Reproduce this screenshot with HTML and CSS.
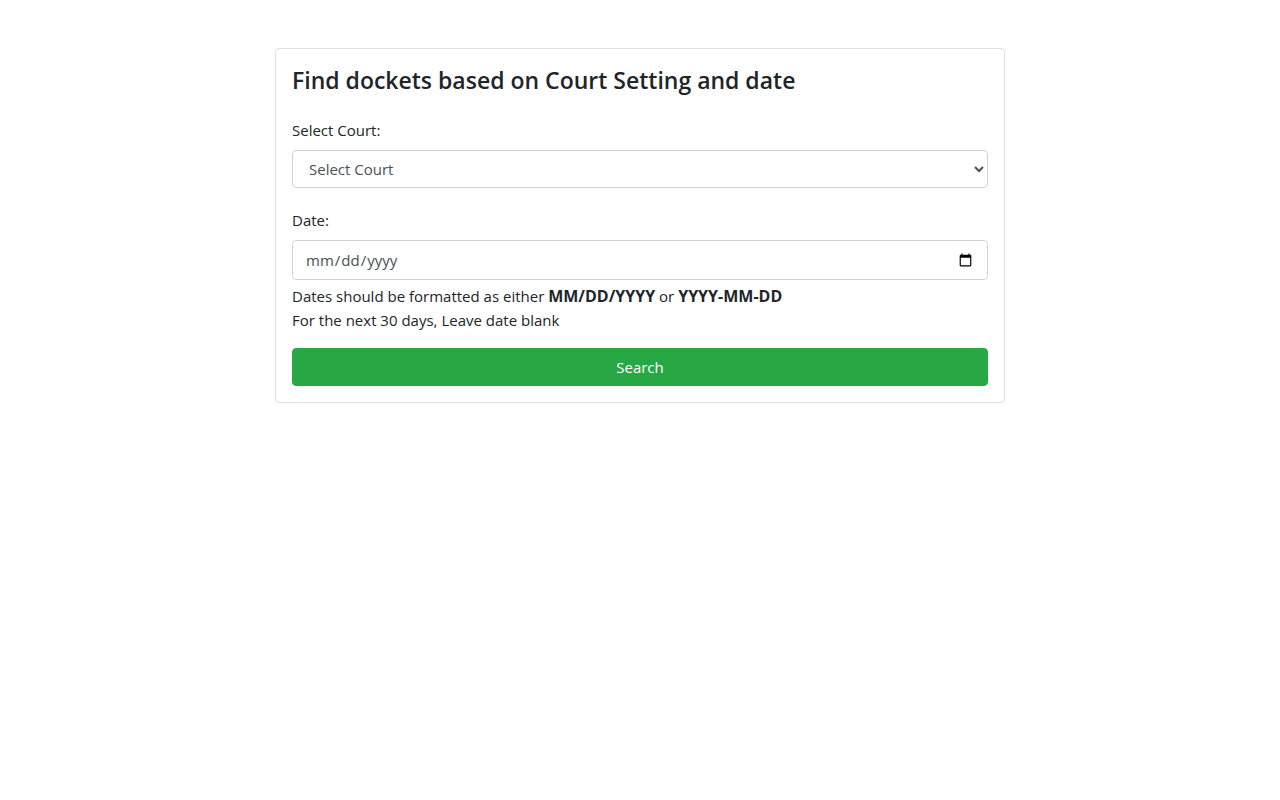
FILE: index.html
```html
<!DOCTYPE html>
<html lang="en">
<head>
<meta charset="utf-8">
<meta name="viewport" content="width=device-width, initial-scale=1">
<title>Find dockets</title>
<link rel="stylesheet" href="styles.css">
</head>
<body>
<main class="container">
  <form class="card">
    <h1 class="card-title">Find dockets based on Court Setting and date</h1>
    <div class="form-group">
      <label for="court">Select Court:</label>
      <select id="court" class="form-control court-select">
        <option>Select Court</option>
      </select>
    </div>
    <div class="form-group date-group">
      <label for="date">Date:</label>
      <input id="date" class="form-control date-input" type="date">
      <p class="hint">Dates should be formatted as either <strong>MM/DD/YYYY</strong> or <strong>YYYY-MM-DD</strong><br>For the next 30 days, Leave date blank</p>
    </div>
    <button class="btn" type="submit">Search</button>
  </form>
</main>
</body>
</html>
```
FILE: styles.css
```css
*, *::before, *::after {
  box-sizing: border-box;
}

body {
  margin: 0;
  background: #fff;
  color: #212529;
  font-family: "Segoe UI", "Open Sans", "Noto Sans", sans-serif;
  font-size: 15px;
  line-height: 24px;
}

.container {
  max-width: 730px;
  margin: 48px auto;
}

.card {
  padding: 16px;
  border: 1px solid #dfdfdf;
  border-radius: 4px;
}

.card-title {
  margin: 0 0 22px;
  font-size: 23px;
  font-weight: 600;
  line-height: 31px;
}

.form-group {
  display: flex;
  flex-direction: column;
  gap: 8px;
  margin-bottom: 20px;
}

.date-group {
  margin-bottom: 16px;
}

.form-control {
  width: 100%;
  height: 38px;
  border: 1px solid #d0d2d4;
  border-radius: 4px;
  background: #fff;
  color: #495057;
  font: inherit;
}

.court-select {
  padding: 6px 0 6px 12px;
}

.date-input {
  height: 40px;
  padding: 6px 12px;
}

.hint {
  margin: -4px 0 0;
}

.hint strong {
  font-size: 16px;
  font-weight: 700;
}

.btn {
  display: block;
  width: 100%;
  height: 38px;
  padding: 6px 12px;
  border: 1px solid #28a745;
  border-radius: 4px;
  background: #28a745;
  color: #fff;
  font: inherit;
  cursor: pointer;
}
```
